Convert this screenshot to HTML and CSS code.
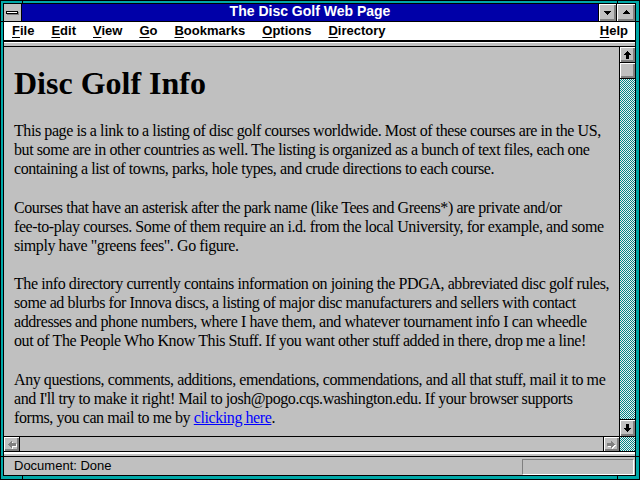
FILE: index.html
```html
<!DOCTYPE html>
<html>
<head>
<meta charset="utf-8">
<title>The Disc Golf Web Page</title>
<link rel="stylesheet" href="styles.css">
</head>
<body>
<div class="win">
  <div class="inner">
    <div class="titlebar">
      <div class="sysmenu"><div class="sysbar"></div></div>
      <div class="title">The Disc Golf Web Page</div>
      <div class="capbtn min"><svg width="17" height="17"><path d="M5 7h7v1h-1v1h-1v1h-1v1h-1v-1h-1v-1h-1v-1h-1z" fill="#000"/></svg></div>
      <div class="capbtn max"><svg width="18" height="17"><path d="M9 6h1v1h1v1h1v1h1v1h-7v-1h1v-1h1v-1h1z" fill="#000"/></svg></div>
    </div>
    <div class="menubar">
      <span class="mi"><u>F</u>ile</span>
      <span class="mi"><u>E</u>dit</span>
      <span class="mi"><u>V</u>iew</span>
      <span class="mi"><u>G</u>o</span>
      <span class="mi"><u>B</u>ookmarks</span>
      <span class="mi"><u>O</u>ptions</span>
      <span class="mi"><u>D</u>irectory</span>
      <span class="mi help"><u>H</u>elp</span>
    </div>
    <div class="sep"></div>
    <div class="main">
      <div class="page">
        <h1>Disc Golf Info</h1>
        <p>This page is a link to a listing of disc golf courses worldwide. Most of these courses are in the US,<br>but some are in other countries as well. The listing is organized as a bunch of text files, each one<br>containing a list of towns, parks, hole types, and crude directions to each course.</p>
        <p>Courses that have an asterisk after the park name (like Tees and Greens*) are private and/or<br>fee-to-play courses. Some of them require an i.d. from the local University, for example, and some<br>simply have "greens fees". Go figure.</p>
        <p>The info directory currently contains information on joining the PDGA, abbreviated disc golf rules,<br>some ad blurbs for Innova discs, a listing of major disc manufacturers and sellers with contact<br>addresses and phone numbers, where I have them, and whatever tournament info I can wheedle<br>out of The People Who Know This Stuff. If you want other stuff added in there, drop me a line!</p>
        <p>Any questions, comments, additions, emendations, commendations, and all that stuff, mail it to me<br>and I'll try to make it right! Mail to josh@pogo.cqs.washington.edu. If your browser supports<br>forms, you can mail to me by <a href="#">clicking here</a>.</p>
      </div>
      <div class="vscroll">
        <div class="sbtn up"><svg width="15" height="15"><path d="M7 4h1v1h1v1h1v1h1v1h-2v4h-3v-4h-2v-1h1v-1h1v-1h1z" fill="#000"/></svg></div>
        <div class="thumb"></div>
        <div class="track"></div>
        <div class="sbtn down"><svg width="15" height="16"><path d="M7 12h1v-1h1v-1h1v-1h1v-1h-2v-4h-3v4h-2v1h1v1h1v1h1z" fill="#000"/></svg></div>
      </div>
      <div class="hscroll">
        <div class="hbtn left"><svg width="15" height="14"><g transform="rotate(-90 7.5 7.5)"><path d="M7 4h1v1h1v1h1v1h1v1h-2v4h-3v-4h-2v-1h1v-1h1v-1h1z" fill="#fff" transform="translate(-1 1)"/><path d="M7 4h1v1h1v1h1v1h1v1h-2v4h-3v-4h-2v-1h1v-1h1v-1h1z" fill="#808080"/></g></svg></div>
        <div class="htrack"></div>
        <div class="hbtn right"><svg width="15" height="14"><g transform="rotate(90 7.5 7.5)"><path d="M7 4h1v1h1v1h1v1h1v1h-2v4h-3v-4h-2v-1h1v-1h1v-1h1z" fill="#fff" transform="translate(1 -1)"/><path d="M7 4h1v1h1v1h1v1h1v1h-2v4h-3v-4h-2v-1h1v-1h1v-1h1z" fill="#808080"/></g></svg></div>
      </div>
      <div class="corner"></div>
    </div>
    <div class="sep2"></div>
    <div class="status">
      <span class="stext">Document: Done</span>
      <div class="panel"></div>
    </div>
  </div>
  <div class="notch vt n1"></div>
  <div class="notch vt n2"></div>
  <div class="notch vb n1"></div>
  <div class="notch vb n2"></div>
  <div class="notch hl h1n"></div>
  <div class="notch hl h2n"></div>
  <div class="notch hr h1n"></div>
  <div class="notch hr h2n"></div>
</div>
</body>
</html>
```
FILE: styles.css
```css
html, body {
  margin: 0;
  padding: 0;
  background: #000;
}
.win {
  position: relative;
  width: 640px;
  height: 480px;
  box-sizing: border-box;
  border: 1px solid #000;
  padding: 2px 3px 3px 2px;
  background: #00a8a8;
}
.inner {
  height: 100%;
  box-sizing: border-box;
  border: 1px solid #000;
  display: flex;
  flex-direction: column;
  background: #c0c0c0;
  overflow: hidden;
}
.titlebar {
  display: flex;
  height: 17px;
  flex: none;
  border-bottom: 1px solid #000;
  background: #0000a8;
}
.sysmenu {
  width: 18px;
  border-right: 1px solid #000;
  background: #c0c0c0;
  padding: 7px 0 0 2px;
  box-sizing: border-box;
}
.sysbar {
  width: 10px;
  height: 1px;
  background: #fff;
  border: 1px solid #000;
  box-shadow: 1px 1px #808080;
}
.title {
  flex: 1;
  color: #fff;
  font: bold 14px/15px "Liberation Sans", Arial, sans-serif;
  text-align: center;
  white-space: nowrap;
}
.capbtn {
  background: #c0c0c0;
  box-shadow: inset 1px 1px #fff, inset -1px -1px #808080, inset -2px -2px #808080;
}
.capbtn svg { display: block; }
.min {
  width: 17px;
  border-left: 1px solid #000;
  border-right: 1px solid #000;
}
.max { width: 18px; }
.menubar {
  display: flex;
  gap: 17px;
  height: 18px;
  flex: none;
  padding: 0 7px 0 8px;
  background: #fff;
  border-bottom: 2px solid #000;
  font: bold 13px/18px "Liberation Sans", Arial, sans-serif;
  color: #000;
  white-space: nowrap;
}
.mi u {
  text-decoration: underline;
  text-underline-offset: 2px;
  text-decoration-thickness: 1px;
}
.help { margin-left: auto; }
.sep {
  height: 4px;
  flex: none;
  background: linear-gradient(#fff 0 1px, #c0c0c0 1px);
  border-bottom: 1px solid #000;
}
.main {
  flex: 1;
  min-height: 0;
  display: grid;
  grid-template-columns: 1fr 15px;
  grid-template-rows: 1fr 14px;
  gap: 1px;
  background: #000;
  border-bottom: 1px solid #000;
}
.page {
  background: #c0c0c0;
  padding: 0 0 0 10px;
  overflow: hidden;
  color: #000;
  font: 16px/19px "Liberation Serif", "Times New Roman", serif;
}
.page h1 {
  font: bold 32px/36px "Liberation Serif", "Times New Roman", serif;
  margin: 18px 0 20px;
}
.page p {
  margin: 0 0 19.5px;
  white-space: nowrap;
  letter-spacing: -0.42px;
}
.page a {
  color: #0000ff;
  text-decoration: underline;
}
.vscroll {
  display: flex;
  flex-direction: column;
  background: repeating-conic-gradient(#008888 0 25%, #f0f0f0 0 50%) 0 0 / 2px 2px;
}
.sbtn, .thumb, .hbtn {
  background: #c0c0c0;
  box-shadow: inset 1px 1px #fff, inset -1px -1px #808080, inset -2px -2px #808080;
}
.sbtn svg, .hbtn svg { display: block; }
.up {
  height: 15px;
  border-bottom: 1px solid #000;
}
.thumb {
  height: 15px;
  border-bottom: 1px solid #000;
}
.track { flex: 1; }
.down {
  height: 16px;
  border-top: 1px solid #000;
}
.hscroll {
  display: flex;
  background: #c0c0c0;
}
.hbtn { width: 15px; }
.hbtn.left { border-right: 1px solid #000; }
.hbtn.right { border-left: 1px solid #000; }
.htrack { flex: 1; }
.corner {
  background: repeating-conic-gradient(#008888 0 25%, #f0f0f0 0 50%) 0 0 / 2px 2px;
}
.sep2 {
  height: 4px;
  flex: none;
  background: linear-gradient(#fff 0 2px, #c0c0c0 2px);
  border-bottom: 1px solid #000;
}
.status {
  display: flex;
  height: 18px;
  flex: none;
  padding-left: 10px;
  font: 13px/18px "Liberation Sans", Arial, sans-serif;
  color: #000;
}
.panel {
  margin: 2px 1px 0 auto;
  width: 110px;
  height: 14px;
  border-top: 1px solid #808080;
  border-left: 1px solid #808080;
  border-bottom: 1px solid #fff;
  border-right: 1px solid #fff;
}
.notch {
  position: absolute;
  background: #000;
}
.vt, .vb { width: 1px; height: 4px; }
.vt { top: -1px; }
.vb { top: 475px; }
.vt.n1, .vb.n1 { left: 21px; }
.vt.n2, .vb.n2 { left: 616px; }
.hl, .hr { width: 4px; height: 1px; }
.hl { left: -1px; }
.hr { left: 635px; }
.h1n { top: 20px; }
.h2n { top: 455px; }
```
